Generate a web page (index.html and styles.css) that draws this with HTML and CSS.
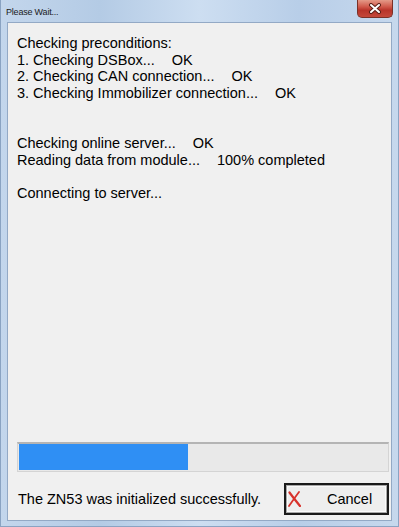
FILE: index.html
```html
<!DOCTYPE html>
<html lang="en">
<head>
    <meta charset="UTF-8">
    <title>Please Wait...</title>
    <link rel="stylesheet" href="styles.css">
</head>
<body>

<div class="window">
    <!-- title bar -->
    <div class="titlebar">
        <span class="title">Please Wait...</span>
        <div class="close">
            <svg width="14" height="11" viewBox="0 0 14 11">
                <path d="M3 2 L11 9 M11 2 L3 9" stroke="#5a1f17" stroke-width="4" stroke-linecap="round"/>
                <path d="M3 2 L11 9 M11 2 L3 9" stroke="#ffffff" stroke-width="2" stroke-linecap="round"/>
            </svg>
        </div>
    </div>

    <div class="client">
        <div class="log">
            <div class="line">Checking preconditions:</div>
            <div class="line">1. Checking DSBox...<span class="status">OK</span></div>
            <div class="line">2. Checking CAN connection...<span class="status">OK</span></div>
            <div class="line">3. Checking Immobilizer connection...<span class="status">OK</span></div>
            <div class="line"></div>
            <div class="line"></div>
            <div class="line">Checking online server...<span class="status">OK</span></div>
            <div class="line">Reading data from module...<span class="status">100% completed</span></div>
            <div class="line"></div>
            <div class="line">Connecting to server...</div>
        </div>

        <div class="progress">
            <div class="progress-fill" style="width: 46%"></div>
        </div>

        <div class="footer">
            <span class="message">The ZN53 was initialized successfully.</span>
            <button class="cancel" type="button">
                <svg class="cancel-icon" width="13" height="16" viewBox="0 0 13 16">
                    <path d="M1.5 1.5 C4 5, 8 10, 12 15" stroke="#d8322b" stroke-width="2.2" fill="none" stroke-linecap="round"/>
                    <path d="M11 1 C8 5, 4.5 10, 1 15" stroke="#d8322b" stroke-width="1.8" fill="none" stroke-linecap="round"/>
                </svg>
                <span class="cancel-label">Cancel</span>
            </button>
        </div>
    </div>
</div>

</body>
</html>
```

FILE: styles.css
```css
body {
    margin: 0;
    background-color: #ffffff;
    font-family: "Liberation Sans", Arial, sans-serif;
}
.window {
    width: 399px;
    height: 527px;
    box-sizing: border-box;
    padding: 0 6px 5px 6px;
    display: flex;
    flex-direction: column;
    background: linear-gradient(90deg, #c3d6ec 0%, #b4cbe5 25%, #cddef1 50%, #b8cee8 75%, #c6d8ed 100%);
    border-left: 1px solid #8aa3c2;
    border-right: 1px solid #8aa3c2;
    border-bottom: 1px solid #8aa3c2;
}
.titlebar {
    height: 22px;
    flex-shrink: 0;
    display: flex;
    align-items: flex-start;
    justify-content: space-between;
}
.title {
    font-size: 9px;
    letter-spacing: -0.2px;
    color: #1b1b1b;
    margin-top: 7px;
    margin-left: -1px;
}
.close {
    width: 36px;
    height: 18px;
    margin-right: -1px;
    box-sizing: border-box;
    border: 1px solid #7a3128;
    border-top: none;
    border-radius: 0 0 5px 5px;
    background: linear-gradient(#e49a88 0%, #d0584a 40%, #b8342a 60%, #c4483a 100%);
    display: flex;
    align-items: center;
    justify-content: center;
}
.client {
    flex: 1;
    display: flex;
    flex-direction: column;
    background-color: #f0f0f0;
    border: 1px solid #93a9c5;
    padding: 12px 2px 5px 9px;
}
.log {
    flex: 1;
    color: #000000;
    font-size: 14.5px;
    line-height: 16.67px;
}
.line {
    height: 16.67px;
    white-space: nowrap;
}
.status {
    margin-left: 17px;
}
.progress {
    height: 30px;
    box-sizing: border-box;
    border: 1px solid #d4d4d4;
    border-top: 2px solid #b4b4b4;
    background-color: #e9e9e9;
    padding: 0 1px 1px 1px;
}
.progress-fill {
    height: 100%;
    background-color: #2f8ff4;
}
.footer {
    display: flex;
    align-items: center;
    justify-content: space-between;
    margin-top: 11px;
}
.message {
    font-size: 14.5px;
    color: #000000;
    margin-left: 1px;
}
.cancel {
    width: 105px;
    height: 32px;
    box-sizing: border-box;
    border: 2px solid #1a1a1a;
    box-shadow: inset 0 0 0 1px #a8a8a8, inset 0 0 0 2px #fafafa;
    background-color: #eeeeee;
    display: flex;
    align-items: center;
    padding: 0 0 0 2px;
    font-family: "Liberation Sans", Arial, sans-serif;
    font-size: 14.5px;
    color: #000000;
}
.cancel-label {
    margin-left: 26px;
}
```
